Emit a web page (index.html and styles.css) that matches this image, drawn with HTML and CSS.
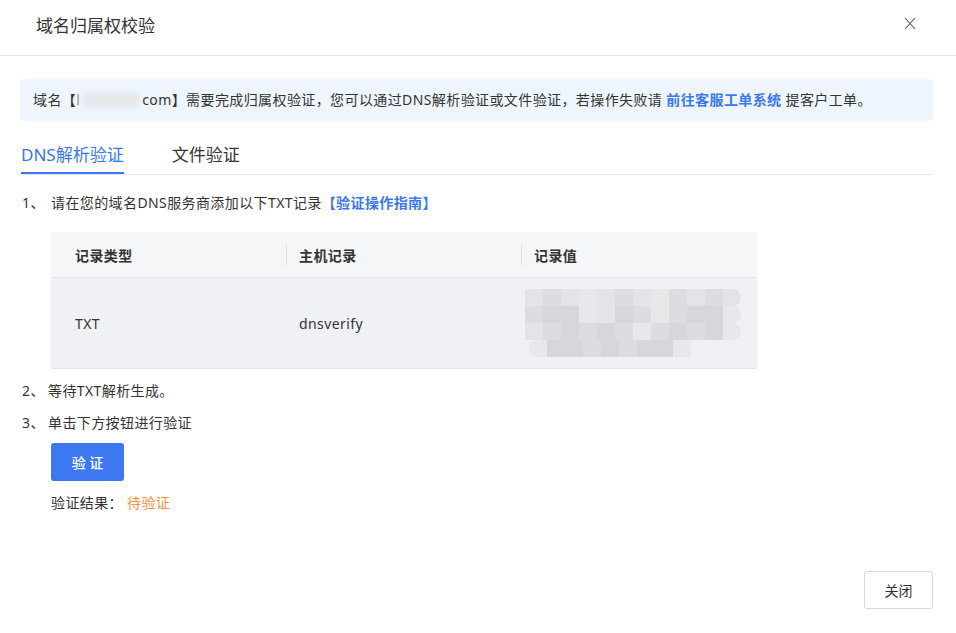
FILE: index.html
```html
<!DOCTYPE html>
<html lang="zh-CN">
<head>
    <meta charset="UTF-8">
    <title>域名归属权校验</title>
    <link rel="stylesheet" href="styles.css">
</head>
<body>
    <div class="dialog">
        <div class="dialog-header">
            <span class="dialog-title">域名归属权校验</span>
            <span class="dialog-close">
                <svg width="12" height="13" viewBox="0 0 12 13"><path d="M1 1 L11 12 M11 1 L1 12" stroke="#555" stroke-width="1.1" fill="none"/></svg>
            </span>
        </div>

        <div class="dialog-body">
            <!-- 提示 -->
            <div class="notice">
                域名【<span class="mask-domain">l<span class="mask-blob"></span></span>com】需要完成归属权验证，您可以通过DNS解析验证或文件验证，若操作失败请 <a class="link" href="#">前往客服工单系统</a> 提客户工单。
            </div>

            <!-- 标签页 -->
            <div class="tabs">
                <div class="tab active">DNS解析验证</div>
                <div class="tab">文件验证</div>
            </div>

            <div class="step first">
                <span class="step-no">1、</span>
                <span>请在您的域名DNS服务商添加以下TXT记录<a class="link" href="#">【验证操作指南】</a></span>
            </div>

            <div class="record-table">
                <div class="row head">
                    <div class="cell">记录类型</div>
                    <div class="cell sep">主机记录</div>
                    <div class="cell sep">记录值</div>
                </div>
                <div class="row body">
                    <div class="cell">TXT</div>
                    <div class="cell pad">dnsverify</div>
                    <div class="cell value">
                        <div class="mosaic">
                            <i class="a"></i><i class="b"></i><i class="a"></i><i class="c"></i><i class="a"></i><i class="b"></i><i class="a"></i><i class="c"></i><i class="b"></i><i class="a"></i><i class="b"></i><i class="end a"></i>
                            <i class="b"></i><i class="d"></i><i class="d"></i><i class="c"></i><i class="a"></i><i class="d"></i><i class="b"></i><i class="c"></i><i class="b"></i><i class="d"></i><i class="d"></i><i class="end c"></i>
                            <i class="a"></i><i class="b"></i><i class="d"></i><i class="b"></i><i class="d"></i><i class="b"></i><i class="c"></i><i class="b"></i><i class="d"></i><i class="b"></i><i class="d"></i><i class="end c"></i>
                        </div>
                        <div class="mosaic last">
                            <i class="start c"></i><i class="d"></i><i class="d"></i><i class="b"></i><i class="d"></i><i class="b"></i><i class="d"></i><i class="d"></i><i class="c"></i>
                        </div>
                    </div>
                </div>
            </div>

            <div class="step">
                <span class="step-no short">2、</span>
                <span>等待TXT解析生成。</span>
            </div>
            <div class="step">
                <span class="step-no short">3、</span>
                <span>单击下方按钮进行验证</span>
            </div>

            <div class="actions">
                <button class="btn-primary" type="button">验 证</button>
                <div class="result">验证结果：<span class="pending">待验证</span></div>
            </div>
        </div>

        <div class="dialog-footer">
            <button class="btn-default" type="button">关闭</button>
        </div>
    </div>
</body>
</html>
```

FILE: styles.css
```css
body {
    margin: 0;
    padding: 0;
    background: #fff;
    font-family: "Noto Sans", "Noto Sans CJK SC", sans-serif;
    color: #333;
    font-size: 14px;
}
.dialog {
    width: 956px;
    height: 633px;
    display: flex;
    flex-direction: column;
}
.dialog-header {
    height: 56px;
    border-bottom: 1px solid #e6e6e6;
    display: flex;
    align-items: center;
    justify-content: space-between;
    padding: 0 40px 0 36px;
    box-sizing: border-box;
}
.dialog-title {
    font-size: 17px;
    color: #333;
    margin-top: -6px;
}
.dialog-close {
    display: flex;
    margin-top: -9px;
}
.dialog-body {
    padding: 23px 23px 0 20px;
    flex: 1;
    letter-spacing: 0.4px;
}
.notice {
    background: #eef5fe;
    border-radius: 4px;
    height: 42px;
    line-height: 42px;
    padding-left: 13px;
    color: #333;
    white-space: nowrap;
}
.mask-domain {
    display: inline-block;
    width: 66px;
    color: #999;
}
.mask-blob {
    display: inline-block;
    width: 58px;
    height: 14px;
    margin-left: 2px;
    vertical-align: -2px;
    background: #e4e6ea;
    border-radius: 7px;
    filter: blur(2px);
}
.link {
    color: #3a78f2;
    font-weight: bold;
    text-decoration: none;
}
.tabs {
    display: flex;
    gap: 48px;
    margin-top: 15px;
    border-bottom: 1px solid #e4e7ed;
    padding-left: 1px;
    letter-spacing: 0;
}
.tab {
    font-size: 17px;
    color: #333;
    height: 38px;
    line-height: 38px;
    box-sizing: border-box;
}
.tab.active {
    color: #3a76ef;
    border-bottom: 2px solid #3a76ef;
    margin-bottom: -1px;
}
.step {
    display: flex;
    padding-left: 2px;
    line-height: 20px;
    margin-top: 12px;
}
.step.first {
    margin-top: 18px;
}
.step-no {
    width: 29px;
    flex-shrink: 0;
}
.step-no.short {
    width: 26px;
}
.record-table {
    margin: 19px 0 11px 31px;
    width: 706px;
}
.row {
    display: grid;
    grid-template-columns: 235px 235px 236px;
    border-bottom: 1px solid #e3e5ea;
}
.row.head {
    height: 45px;
    background: #f5f6f8;
    font-weight: bold;
}
.row.body {
    height: 90px;
    background: #f0f1f4;
}
.cell {
    display: flex;
    align-items: center;
    padding-left: 24px;
}
.cell.sep {
    padding-left: 0;
}
.cell.sep::before {
    content: "";
    width: 1px;
    height: 22px;
    background: #dfe1e5;
    margin-right: 12px;
}
.cell.pad {
    padding-left: 13px;
}
.cell.value {
    padding-left: 4px;
    flex-direction: column;
    align-items: flex-start;
    justify-content: center;
}
.mosaic {
    display: grid;
    grid-template-columns: repeat(12, 18px);
    grid-auto-rows: 17px;
}
.mosaic.last {
    grid-template-columns: repeat(9, 18px);
    margin-left: 4px;
}
.mosaic i {
    display: block;
}
.mosaic .a { background: #e3e4e7; }
.mosaic .b { background: #dcdde0; }
.mosaic .c { background: #e7e8ea; }
.mosaic .d { background: #d6d7da; }
.mosaic .end { border-radius: 0 9px 9px 0; }
.mosaic .start { border-radius: 9px 0 0 9px; }
.actions {
    padding-left: 31px;
    margin-top: 10px;
}
.btn-primary {
    width: 73px;
    height: 38px;
    background: #3d77f2;
    color: #fff;
    border: none;
    border-radius: 3px;
    font-family: inherit;
    font-size: 14px;
    font-weight: 500;
    cursor: pointer;
}
.result {
    margin-top: 12px;
    line-height: 20px;
}
.pending {
    color: #f7923a;
    margin-left: 4px;
}
.dialog-footer {
    display: flex;
    justify-content: flex-end;
    padding: 0 23px 24px 0;
}
.btn-default {
    width: 69px;
    height: 38px;
    background: #fff;
    border: 1px solid #d9d9d9;
    border-radius: 3px;
    font-family: inherit;
    font-size: 14px;
    color: #333;
    cursor: pointer;
}
```
